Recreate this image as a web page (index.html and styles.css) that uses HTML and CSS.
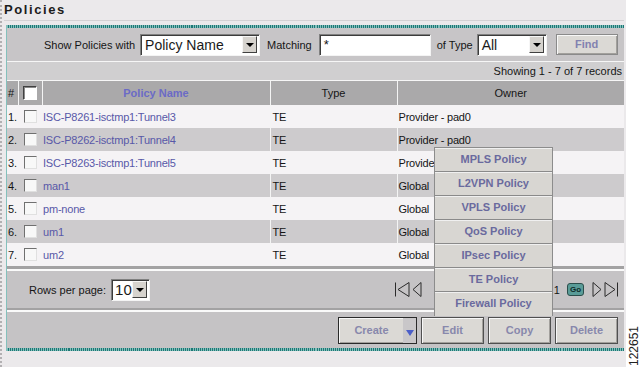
FILE: index.html
```html
<!DOCTYPE html>
<html lang="en">
<head>
    <meta charset="utf-8">
    <title>Policies</title>
    <link rel="stylesheet" href="styles.css">
</head>
<body>
    <div class="page">
        <div class="main">
            <h1 class="title">Policies</h1>

            <div class="panel">
                <!-- Filter bar -->
                <div class="filter">
                    <span class="label">Show Policies with</span>
                    <span class="select sel-field"><span class="sel-text">Policy Name</span><span class="drop"></span></span>
                    <span class="label gap7">Matching</span>
                    <span class="textbox">*</span>
                    <span class="label gap6">of Type</span>
                    <span class="select sel-type"><span class="sel-text">All</span><span class="drop"></span></span>
                    <button class="btn find">Find</button>
                </div>

                <div class="showing">Showing 1 - 7 of 7 records</div>

                <!-- Policy list -->
                <table class="grid">
                    <colgroup>
                        <col class="c-num"><col class="c-chk"><col class="c-name"><col class="c-type"><col class="c-owner">
                    </colgroup>
                    <thead>
                        <tr>
                            <th class="num">#</th>
                            <th><span class="box head-box"></span></th>
                            <th class="sortable">Policy Name</th>
                            <th>Type</th>
                            <th class="last">Owner</th>
                        </tr>
                    </thead>
                    <tbody id="rows"></tbody>
                </table>

                <!-- Paging -->
                <div class="pager">
                    <span class="label">Rows per page:</span>
                    <span class="select sel-rows"><span class="sel-text">10</span><span class="drop"></span></span>
                    <div class="nav">
                        <svg width="16" height="15" viewBox="0 0 16 15"><path d="M1.5 0.5V14.5M15 0.5L4 7.5L15 14.5Z" fill="none" stroke="#2b2b2b"/></svg>
                        <svg width="10" height="15" viewBox="0 0 10 15"><path d="M9 0.5L1 7.5L9 14.5Z" fill="none" stroke="#2b2b2b"/></svg>
                        <span class="page-of">Page 1 of 1</span>
                        <span class="go">Go</span>
                        <svg width="10" height="15" viewBox="0 0 10 15"><path d="M1 0.5L9 7.5L1 14.5Z" fill="none" stroke="#2b2b2b"/></svg>
                        <svg width="15" height="15" viewBox="0 0 15 15"><path d="M1 0.5L11 7.5L1 14.5Z M13.5 0.5V14.5" fill="none" stroke="#2b2b2b"/></svg>
                    </div>
                </div>

                <!-- Actions -->
                <div class="actions">
                    <button class="btn create"><span class="create-text">Create</span><span class="create-arrow"></span></button>
                    <button class="btn act">Edit</button>
                    <button class="btn act">Copy</button>
                    <button class="btn act">Delete</button>
                </div>

                <!-- Create menu, open -->
                <ul class="menu">
                    <li>MPLS Policy</li>
                    <li>L2VPN Policy</li>
                    <li>VPLS Policy</li>
                    <li>QoS Policy</li>
                    <li>IPsec Policy</li>
                    <li>TE Policy</li>
                    <li>Firewall Policy</li>
                </ul>
            </div>
        </div>
        <div class="side"><span class="fig">122651</span></div>
    </div>

    <script>
        const policies = [
            { name: 'ISC-P8261-isctmp1:Tunnel3', type: 'TE', owner: 'Provider - pad0' },
            { name: 'ISC-P8262-isctmp1:Tunnel4', type: 'TE', owner: 'Provider - pad0' },
            { name: 'ISC-P8263-isctmp1:Tunnel5', type: 'TE', owner: 'Provider - pad0' },
            { name: 'man1', type: 'TE', owner: 'Global' },
            { name: 'pm-none', type: 'TE', owner: 'Global' },
            { name: 'um1', type: 'TE', owner: 'Global' },
            { name: 'um2', type: 'TE', owner: 'Global' }
        ];

        const rows = document.getElementById('rows');
        policies.forEach((p, i) => {
            const tr = document.createElement('tr');
            tr.className = i % 2 ? 'even' : 'odd';
            tr.innerHTML = `
                <td class="num">${i + 1}.</td>
                <td class="chk"><span class="box"></span></td>
                <td class="name"><a href="#">${p.name}</a></td>
                <td class="type">${p.type}</td>
                <td class="owner">${p.owner}</td>
            `;
            rows.appendChild(tr);
        });
    </script>
</body>
</html>
```

FILE: styles.css
```css
/* Base */
* {
    box-sizing: border-box;
}

body {
    margin: 0;
    background: #ffffff;
    color: #151515;
    font-family: "Liberation Sans", Arial, sans-serif;
    font-size: 11px;
}

.page {
    display: flex;
    height: 367px;
    overflow: hidden;
}

.main {
    width: 626px;
    border-left: 2px dotted #b2b0b2;
    background: #ebe9eb;
}

.side {
    flex: 1;
    display: flex;
    align-items: flex-end;
    justify-content: center;
    padding-bottom: 1px;
}

.fig {
    writing-mode: vertical-rl;
    transform: rotate(180deg);
    font-size: 12px;
    color: #222;
}

.title {
    margin: 0 2px 0 2px;
    padding-top: 2px;
    height: 21px;
    font-size: 13px;
    line-height: 16px;
    letter-spacing: 1.6px;
    font-weight: bold;
    color: #1c1c1c;
    border-bottom: 1px solid #d3d1d3;
}

/* Panel */
.panel {
    position: relative;
    width: 618px;
    margin: 4px 0 0 4px;
    border-left: 1px solid #f2f2f2;
    border-top: 3px solid #2a807e;
    border-bottom: 3px solid #2a807e;
    border-image: repeating-linear-gradient(90deg, #1e7775 0 1px, #84c0bc 1px 2px) 3;
    border-left-width: 1px;
    background: #cfcdcf;
}

.filter {
    display: flex;
    align-items: center;
    height: 34px;
    padding-left: 37px;
    background: #c7c5c7;
    border-bottom: 1px solid #f6f6f6;
}

.label {
    white-space: nowrap;
}

.gap7 { margin: 0 7px; }
.gap6 { margin: 0 4px 0 6px; }

/* Windows style inputs */
.select, .textbox {
    display: flex;
    align-items: center;
    height: 22px;
    background: #ffffff;
    border-top: 1px solid #808080;
    border-left: 1px solid #808080;
    border-right: 1px solid #f4f4f4;
    border-bottom: 1px solid #f4f4f4;
    box-shadow: inset 1px 1px 0 #3c3c3c;
}

.sel-text {
    flex: 1;
    padding-left: 4px;
    font-size: 14px;
    line-height: 18px;
    color: #1a1a1a;
}

.drop {
    position: relative;
    width: 15px;
    height: 17px;
    margin-right: 2px;
    background: #d6d3ce;
    border-top: 1px solid #f6f6f6;
    border-left: 1px solid #f6f6f6;
    border-right: 1px solid #404040;
    border-bottom: 1px solid #404040;
}

.drop::after {
    content: "";
    position: absolute;
    left: 3px;
    top: 6px;
    border-left: 4px solid transparent;
    border-right: 4px solid transparent;
    border-top: 4px solid #000;
}

.sel-field { width: 120px; margin-left: 5px; }
.sel-type { width: 70px; }
.sel-rows { width: 39px; margin-left: 5px; }
.sel-rows .sel-text { padding-left: 3px; font-size: 15px; }

.textbox {
    width: 112px;
    padding-left: 4px;
    font-size: 13px;
}

.btn {
    font-family: "Liberation Sans", Arial, sans-serif;
    font-size: 11px;
    font-weight: bold;
    color: #8888ac;
    background: #dbd9d5;
    border: 1px solid #505050;
    box-shadow: inset 1px 1px 0 #f7f7f7, inset -1px -1px 0 #a2a09c;
    padding: 0;
    cursor: pointer;
}

.find {
    width: 62px;
    height: 21px;
    margin-left: 9px;
    margin-top: -1px;
    border-color: #8a8a8a;
    color: #8282b0;
}

.showing {
    height: 19px;
    padding-right: 2px;
    text-align: right;
    line-height: 18px;
    background: #d0cfd0;
    border-bottom: 1px solid #f6f6f6;
}

/* Grid */
.grid {
    width: 617px;
    border-collapse: collapse;
    table-layout: fixed;
}

.c-num { width: 11px; }
.c-chk { width: 24px; }
.c-name { width: 228px; }
.c-type { width: 127px; }
.c-owner { width: 227px; }

.grid th {
    height: 24px;
    padding: 0;
    background: #aaa9aa;
    font-weight: normal;
    border-right: 1px solid #f4f4f4;
}

.grid th.last {
    border-right: none;
}

.grid th.num {
    text-align: left;
    padding-left: 1px;
}

.grid th.sortable {
    color: #6b6bc6;
    font-weight: bold;
}

.grid td {
    height: 23px;
    padding: 0 0 0 1px;
    white-space: nowrap;
    overflow: hidden;
    letter-spacing: -0.2px;
}

.grid tr.odd td { background: #f5f3f5; }
.grid tr.even td { background: #cdcbcd; }

.grid td.name, .grid td.type {
    border-right: 1px solid #f4f4f4;
}

.grid td.type { padding-left: 2px; }
.grid td.chk { text-align: center; padding: 0; }

.grid a {
    color: #5858a8;
    text-decoration: none;
}

.box {
    display: inline-block;
    width: 13px;
    height: 13px;
    vertical-align: middle;
    background: #f8f8f8;
    border-top: 1px solid #707070;
    border-left: 1px solid #707070;
    border-right: 1px solid #e0e0e0;
    border-bottom: 1px solid #e0e0e0;
}

.head-box {
    width: 14px;
    height: 14px;
    background: #ffffff;
    border-top: 1px solid #404040;
    border-left: 1px solid #404040;
    border-right: 1px solid #ffffff;
    border-bottom: 1px solid #ffffff;
    box-shadow: inset 1px 1px 0 #8a8a8a;
}

/* Paging */
.pager {
    display: flex;
    align-items: center;
    height: 42px;
    padding: 2px 5px 0 22px;
    background: #c5c3c5;
    border-top: 3px solid #a3a2a3;
    box-shadow: inset 0 2px 0 #fafafa;
}

.nav {
    display: flex;
    align-items: center;
    margin-left: auto;
    gap: 2px;
}

.page-of {
    width: 134px;
    margin: 0 0 0 2px;
    text-align: right;
}

.go {
    width: 17px;
    height: 13px;
    margin: 0 6px 0 5px;
    border: 1px solid #2c4e4c;
    border-radius: 3px;
    background: #5a9c98;
    color: #0d2a29;
    font-size: 8px;
    font-weight: bold;
    line-height: 11px;
    text-align: center;
}

/* Actions */
.actions {
    display: flex;
    justify-content: flex-end;
    align-items: center;
    gap: 4px;
    height: 40px;
    padding: 2px 6px 0 0;
    background: #c5c3c5;
    border-top: 2px solid #a3a2a3;
    box-shadow: inset 0 2px 0 #fafafa;
}

.act {
    width: 63px;
    height: 27px;
}

.create {
    display: flex;
    width: 79px;
    height: 27px;
    border-color: #2a2a2a;
}

.create-text {
    flex: 1;
    line-height: 25px;
    padding-left: 1px;
}

.create-arrow {
    position: relative;
    width: 13px;
    height: 25px;
    background: #c9c7c9;
}

.create-arrow::after {
    content: "";
    position: absolute;
    left: 3px;
    top: 12px;
    border-left: 4px solid transparent;
    border-right: 4px solid transparent;
    border-top: 6px solid #4b5ec8;
}

/* Dropdown menu */
.menu {
    position: absolute;
    left: 427px;
    top: 119px;
    width: 119px;
    margin: 0;
    padding: 0;
    list-style: none;
    background: #d8d6d2;
    border: 1px solid #8c8c8c;
    border-bottom: none;
}

.menu li {
    height: 24px;
    line-height: 22px;
    text-align: center;
    font-weight: bold;
    color: #6a6a9e;
    border-bottom: 1px solid #8a8a8a;
    box-shadow: inset 0 1px 0 #f0f0f0;
}

.menu li:last-child {
    border-bottom-color: #d8d6d2;
}
```
